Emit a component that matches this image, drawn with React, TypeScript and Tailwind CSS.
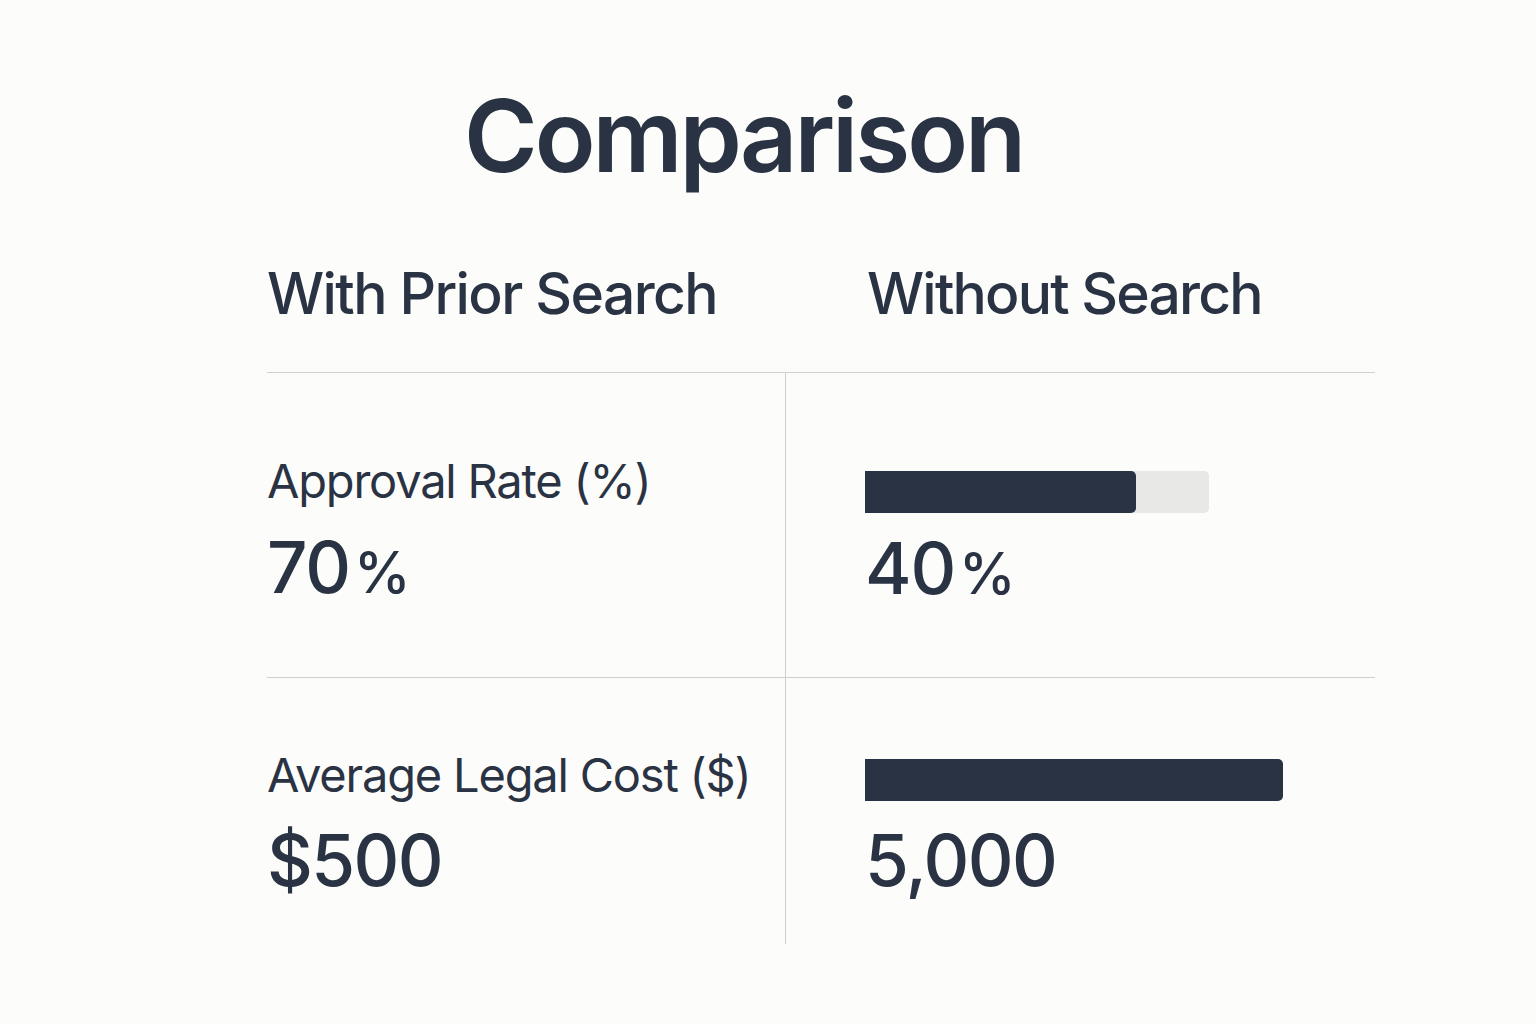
import React from 'react';

const ink = 'text-[#2a3343]';

function Bar({ fill, track }: { fill: number; track?: number }) {
  return (
    <div className="h-[42px] flex">
      {track ? (
        <div className="h-full rounded-r-[5px] bg-[#e8e8e6]" style={{ width: track }}>
          <div className="h-full rounded-r-[5px] bg-[#2a3343]" style={{ width: fill }} />
        </div>
      ) : (
        <div className="h-full rounded-r-[5px] bg-[#2a3343]" style={{ width: fill }} />
      )}
    </div>
  );
}

function Percent({ n }: { n: string }) {
  return (
    <div className={`text-[71px] leading-none font-medium tracking-[-1.2px] ${ink}`}>
      {n}
      <span className="ml-[4px] text-[57px]">%</span>
    </div>
  );
}

export default function App() {
  return (
    <div
      className={`min-h-[1024px] w-[1536px] bg-[#fcfcfa] ${ink}`}
      style={{ fontFamily: 'Inter, "Noto Sans", sans-serif' }}
    >
      <div className="pt-[86px] pl-[464px]">
        <h1 className="text-[100px] leading-none font-semibold tracking-[-3px]">Comparison</h1>
      </div>

      <div className="mt-[79px] ml-[267px] grid grid-cols-[518px_590px]">
        {/* header */}
        <div className="h-[108px] border-b border-[#cfcfcd] whitespace-nowrap text-[57px] leading-none font-medium tracking-[-1.6px]">
          With Prior Search
        </div>
        <div className="h-[108px] border-b border-[#cfcfcd] pl-[82px] whitespace-nowrap text-[57px] leading-none font-medium tracking-[-1.8px]">
          Without Search
        </div>

        {/* approval rate */}
        <div className="h-[305px] border-b border-[#cfcfcd] pt-[84px]">
          <div className="whitespace-nowrap text-[47px] leading-none tracking-[-1.2px]">Approval Rate (%)</div>
          <div className="mt-[28px]">
            <Percent n="70" />
          </div>
        </div>
        <div className="h-[305px] border-b border-l border-[#cfcfcd] pl-[79px] pt-[98px]">
          <Bar fill={271} track={344} />
          <div className="mt-[20px]">
            <Percent n="40" />
          </div>
        </div>

        {/* legal cost */}
        <div className="h-[266px] pt-[73px]">
          <div className="whitespace-nowrap text-[47px] leading-none tracking-[-1.2px]">Average Legal Cost ($)</div>
          <div className="mt-[27px] text-[71px] leading-none font-medium tracking-[-1.6px]">$500</div>
        </div>
        <div className="h-[266px] border-l border-[#cfcfcd] pl-[79px] pt-[81px]">
          <Bar fill={418} />
          <div className="mt-[24px] text-[71px] leading-none font-medium tracking-[-1.6px]">5,000</div>
        </div>
      </div>
    </div>
  );
}
